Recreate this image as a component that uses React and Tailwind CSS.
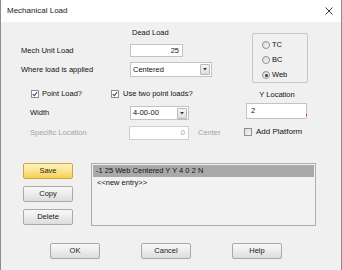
import React from "react";

const font = { fontFamily: '"Liberation Sans", Arial, sans-serif' };

const Btn = ({ children, yellow, className = "" }) => (
  <div
    className={`flex items-center justify-center h-[16px] w-[50px] rounded-[2px] border text-[7.5px] leading-[10px] text-[#1a1a1a] ${
      yellow
        ? "border-[#c9a84a] bg-gradient-to-b from-[#fdf2bd] via-[#fbe48a] to-[#f6cf4a]"
        : "border-[#a9a9a9] bg-gradient-to-b from-[#f8f8f8] via-[#ececec] to-[#dcdcdc]"
    } ${className}`}
  >
    {children}
  </div>
);

const Check = ({ checked }) => (
  <div
    className={`flex items-center justify-center w-[8px] h-[8px] border border-[#8e8f8f] ${
      checked ? "bg-white" : "bg-gradient-to-br from-[#dcdcdc] to-[#f6f6f6]"
    }`}
  >
    {checked && (
      <svg width="6" height="6" viewBox="0 0 6 6">
        <path d="M0.8 3.1 L2.4 4.7 L5.2 1" fill="none" stroke="#3c4f78" strokeWidth="1.1" />
      </svg>
    )}
  </div>
);

const Radio = ({ checked, label }) => (
  <div className="flex items-center gap-[2px] h-[10px]">
    <div className="flex items-center justify-center w-[8px] h-[8px] rounded-full border border-[#8e8f8f] bg-gradient-to-br from-[#d8d8d8] to-[#f8f8f8]">
      {checked && <div className="w-[3px] h-[3px] rounded-full bg-[#2b3a5a]" />}
    </div>
    <span>{label}</span>
  </div>
);

const DropBtn = () => (
  <div className="flex items-center justify-center w-[10px] h-[11px] border border-[#b8b8b8] rounded-[1px] bg-gradient-to-b from-[#f6f6f6] to-[#dedede]">
    <svg width="4" height="3" viewBox="0 0 4 3">
      <path d="M0 0 H4 L2 2.5 Z" fill="#404040" />
    </svg>
  </div>
);

export default function App() {
  return (
    <div
      style={font}
      className="w-[342px] h-[270px] flex flex-col border-x border-[#8c8c8c] bg-[#f0f0f0] text-[7.5px] leading-[10px] text-[#111] overflow-hidden"
    >
      {/* Title bar */}
      <div className="h-[22px] bg-white flex items-center justify-between pl-[6px] pr-[8px]">
        <span className="text-[8px] text-[#1a1a1a]">Mechanical Load</span>
        <svg width="8" height="8" viewBox="0 0 8 8">
          <path d="M0.5 0.5 L7.5 7.5 M7.5 0.5 L0.5 7.5" stroke="#222" strokeWidth="0.9" />
        </svg>
      </div>

      {/* Upper form */}
      <div className="flex pl-[20px]">
        <div className="w-[223px] flex flex-col">
          <div className="mt-[6px] ml-[111px] h-[10px]">Dead Load</div>
          <div className="mt-[6px] flex items-center h-[13px]">
            <span className="w-[109px]">Mech Unit Load</span>
            <div className="w-[53px] h-[13px] bg-white border border-[#c3c3c3] flex items-center justify-end pr-[3px]">
              25
            </div>
          </div>
          <div className="mt-[5px] flex items-center h-[15px]">
            <span className="w-[109px]">Where load is applied</span>
            <div className="w-[82px] h-[15px] bg-white border border-[#c3c3c3] flex items-center justify-between pl-[2px] pr-[1px]">
              <span>Centered</span>
              <DropBtn />
            </div>
          </div>
          <div className="mt-[12px] flex items-center h-[10px]">
            <div className="ml-[10px] flex items-center gap-[3px] w-[80px]">
              <Check checked />
              <span>Point Load?</span>
            </div>
            <div className="flex items-center gap-[4px]">
              <Check checked />
              <span>Use two point loads?</span>
            </div>
          </div>
          <div className="mt-[7px] flex items-center h-[14px]">
            <span className="ml-[9px] w-[100px]">Width</span>
            <div className="w-[59px] h-[14px] bg-white border border-[#c3c3c3] flex items-center justify-between pl-[2px] pr-[1px]">
              <span>4-00-00</span>
              <DropBtn />
            </div>
          </div>
          <div className="mt-[6px] flex items-center h-[14px] text-[#a3a3a3]">
            <span className="ml-[9px] w-[99px]">Specific Location</span>
            <div className="w-[60px] h-[14px] bg-white border border-[#cfcfcf] flex items-center justify-end pr-[3px]">
              0
            </div>
            <span className="ml-[9px]">Center</span>
          </div>
        </div>

        <div className="w-[66px] flex flex-col">
          <div className="mt-[11px] ml-[8px] w-[56px] h-[50px] border border-[#c6c6c6] rounded-[2px] flex flex-col gap-[5px] pl-[9px] pt-[6px]">
            <Radio label="TC" />
            <Radio label="BC" />
            <Radio checked label="Web" />
          </div>
          <div className="mt-[7px] ml-[2px] w-[62px] text-center h-[10px]">Y Location</div>
          <div className="relative mt-[3px] ml-[2px] w-[61px] h-[16px] bg-white border border-[#c3c3c3] flex items-center pl-[4px]">
            2
            <div className="absolute right-[-1px] bottom-[2px] w-[1px] h-[2px] bg-[#e02020]" />
          </div>
          <div className="mt-[8px] flex items-center gap-[4px] h-[10px]">
            <Check />
            <span className="text-[8px]">Add Platform</span>
          </div>
        </div>
      </div>

      {/* List section */}
      <div className="flex mt-[23px] pl-[22px]">
        <div className="flex flex-col gap-[7px]">
          <Btn yellow>Save</Btn>
          <Btn>Copy</Btn>
          <Btn>Delete</Btn>
        </div>
        <div className="ml-[18px] w-[225px] h-[63px] border border-[#adadad] bg-[#f2f2f2] p-[1px]">
          <div className="h-[12px] bg-[#a9a9a9] flex items-center pl-[3px] text-[#151515]">
            -1 25 Web Centered Y Y 4 0 2 N
          </div>
          <div className="h-[12px] flex items-center pl-[4px]">&lt;&lt;new entry&gt;&gt;</div>
        </div>
      </div>

      {/* Bottom buttons */}
      <div className="flex mt-[17px] pl-[49px] gap-[41px]">
        <Btn>OK</Btn>
        <Btn>Cancel</Btn>
        <Btn>Help</Btn>
      </div>
    </div>
  );
}
